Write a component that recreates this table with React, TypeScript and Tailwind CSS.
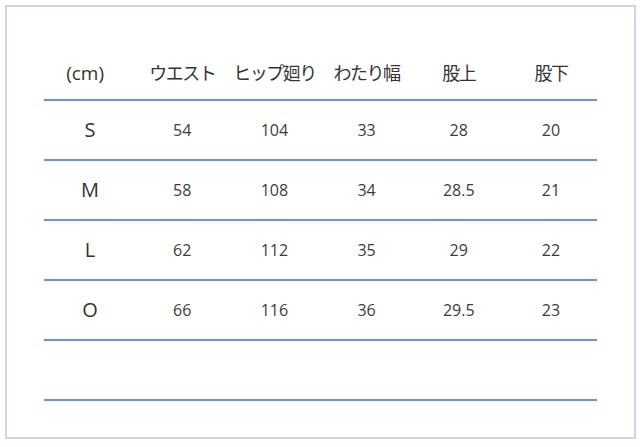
const headers = ['(cm)', 'ウエスト', 'ヒップ廻り', 'わたり幅', '股上', '股下'];

const rows = [
  ['S', '54', '104', '33', '28', '20'],
  ['M', '58', '108', '34', '28.5', '21'],
  ['L', '62', '112', '35', '29', '22'],
  ['O', '66', '116', '36', '29.5', '23'],
];

const font = { fontFamily: '"Open Sans", "Noto Sans CJK JP", sans-serif' };

function Line() {
  return <div className="h-[2px] bg-[#6f93d2] shadow-[0_0_1px_#a9c0e8]" />;
}

export default function App() {
  return (
    <div className="w-[640px] h-[447px] bg-white pt-[5px] pl-[5px]" style={font}>
      <div className="w-[631px] h-[434px] border-2 border-[#cbd5ea] pt-[40px] pl-[37px]">
        <div className="w-[553px]">
          <div className="grid grid-cols-6 h-[52px] items-center text-[18px] text-[#333]">
            {headers.map((h, i) => (
              <div key={h} className={i === 0 ? 'text-center text-[19px] pr-[10px]' : 'text-center tracking-[-1.5px]'}>
                {h}
              </div>
            ))}
          </div>
          <Line />
          {rows.map(r => (
            <div key={r[0]}>
              <div className="grid grid-cols-6 h-[58px] items-center text-[#333]">
                {r.map((c, i) => (
                  <div key={i} className={i === 0 ? 'text-center text-[20px]' : 'text-center text-[16px] text-[#3c3c3c]'}>
                    {c}
                  </div>
                ))}
              </div>
              <Line />
            </div>
          ))}
          <div className="h-[58px]" />
          <Line />
        </div>
      </div>
    </div>
  );
}
